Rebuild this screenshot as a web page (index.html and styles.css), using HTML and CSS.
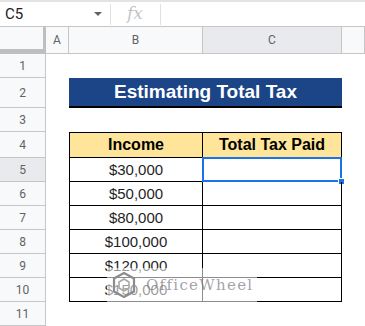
FILE: index.html
```html
<!DOCTYPE html>
<html lang="en">

<head>
  <meta charset="UTF-8">
  <meta name="viewport" content="width=device-width, initial-scale=1.0">
  <title>Estimating Total Tax</title>
  <link rel="stylesheet" href="styles.css">
</head>

<body>
  <!-- Formula bar -->
  <div class="formula-bar">
    <div class="name-box">
      <span class="cell-ref">C5</span>
      <span class="caret"></span>
    </div>
    <div class="fx">fx</div>
    <div class="formula-input"></div>
  </div>

  <!-- Sheet -->
  <div class="sheet">
    <div class="corner"></div>
    <div class="col-hdr">A</div>
    <div class="col-hdr">B</div>
    <div class="col-hdr selected">C</div>
    <div class="col-hdr"></div>

    <div class="row-hdr">1</div>
    <div class="cell"></div><div class="cell"></div><div class="cell"></div><div class="cell"></div>

    <div class="row-hdr">2</div>
    <div class="cell"></div>
    <div class="title">Estimating Total Tax</div>
    <div class="cell"></div>

    <div class="row-hdr">3</div>
    <div class="cell"></div><div class="cell"></div><div class="cell"></div><div class="cell"></div>

    <div class="row-hdr">4</div>
    <div class="cell"></div>
    <div class="tcell head first top">Income</div>
    <div class="tcell head top">Total Tax Paid</div>
    <div class="cell"></div>

    <div class="row-hdr selected">5</div>
    <div class="cell"></div>
    <div class="tcell first">$30,000</div>
    <div class="tcell active"><span class="sel-box"></span><span class="handle"></span></div>
    <div class="cell"></div>

    <div class="row-hdr">6</div>
    <div class="cell"></div>
    <div class="tcell first">$50,000</div>
    <div class="tcell"></div>
    <div class="cell"></div>

    <div class="row-hdr">7</div>
    <div class="cell"></div>
    <div class="tcell first">$80,000</div>
    <div class="tcell"></div>
    <div class="cell"></div>

    <div class="row-hdr">8</div>
    <div class="cell"></div>
    <div class="tcell first">$100,000</div>
    <div class="tcell"></div>
    <div class="cell"></div>

    <div class="row-hdr">9</div>
    <div class="cell"></div>
    <div class="tcell first">$120,000</div>
    <div class="tcell"></div>
    <div class="cell"></div>

    <div class="row-hdr">10</div>
    <div class="cell"></div>
    <div class="tcell first">$150,000</div>
    <div class="tcell"></div>
    <div class="cell"></div>

    <div class="row-hdr">11</div>
    <div class="cell"></div><div class="cell"></div><div class="cell"></div><div class="cell"></div>

    <!-- watermark -->
    <div class="watermark">
      <svg class="wm-logo" width="24" height="26" viewBox="0 0 24 26">
        <path d="M12 1 L22 6.5 L22 19.5 L12 25 L2 19.5 L2 6.5 Z" fill="none" stroke="#8c8c8c" stroke-width="2.2" />
        <path d="M12 7 L17 10 L17 16 L12 19 L7 16 L7 10 Z" fill="none" stroke="#a8a8a8" stroke-width="1.6" />
      </svg>
      <span class="wm-text">OfficeWheel</span>
    </div>
  </div>
</body>

</html>
```

FILE: styles.css
```css
:root {
  --hdr-bg: #f8f9fa;
  --hdr-sel: #e8eaed;
  --hdr-line: #c4c7c5;
  --hdr-text: #5f6368;
  --title-bg: #1c4587;
  --head-bg: #ffe599;
  --blue: #1a73e8;
}

* {
  box-sizing: border-box;
}

body {
  margin: 0;
  padding: 0;
  background: #fff;
  font-family: Roboto, 'Liberation Sans', Arial, sans-serif;
  width: 365px;
  height: 326px;
  overflow: hidden;
}

/* Formula bar */
.formula-bar {
  display: flex;
  align-items: center;
  height: 27px;
  border-top: 2px solid #e3e3e3;
  border-bottom: 1px solid var(--hdr-line);
}

.name-box {
  display: flex;
  align-items: center;
  justify-content: space-between;
  width: 111px;
  height: 21px;
  padding: 0 8px 0 5px;
  border-right: 1px solid #e0e0e0;
}

.cell-ref {
  font-size: 15px;
  color: #202124;
}

.caret {
  width: 0;
  height: 0;
  border-left: 4px solid transparent;
  border-right: 4px solid transparent;
  border-top: 4px solid #5f6368;
}

.fx {
  width: 50px;
  height: 21px;
  padding-left: 16px;
  font-family: 'DejaVu Serif', 'Liberation Serif', serif;
  font-style: italic;
  font-size: 17px;
  line-height: 19px;
  color: #c4c4c4;
  border-right: 1px solid #e0e0e0;
}

/* Grid */
.sheet {
  position: relative;
  display: grid;
  grid-template-columns: 46px 23px 134px 139px 23px;
  grid-template-rows: 27px 24px 30px 24px 26px repeat(6, 24px) 24px;
}

.corner {
  background: var(--hdr-bg);
  border-right: 3px solid #bfbfbf;
  border-bottom: 5px solid #bfbfbf;
}

.col-hdr {
  display: flex;
  align-items: center;
  justify-content: center;
  background: var(--hdr-bg);
  border-right: 1px solid var(--hdr-line);
  border-bottom: 1px solid var(--hdr-line);
  font-size: 12px;
  color: var(--hdr-text);
}

.row-hdr {
  display: flex;
  align-items: center;
  justify-content: center;
  background: var(--hdr-bg);
  border-right: 1px solid var(--hdr-line);
  border-bottom: 1px solid var(--hdr-line);
  font-size: 12px;
  color: var(--hdr-text);
}

.selected {
  background: var(--hdr-sel);
}

.cell {
  background: #fff;
}

.title {
  grid-column: span 2;
  display: flex;
  align-items: center;
  justify-content: center;
  background: var(--title-bg);
  border-bottom: 2px solid #000;
  color: #fff;
  font-family: 'Liberation Sans', Arial, sans-serif;
  font-weight: bold;
  font-size: 19px;
}

.tcell {
  position: relative;
  display: flex;
  align-items: center;
  justify-content: center;
  border-right: 1px solid #000;
  border-bottom: 1px solid #000;
  font-family: 'Liberation Sans', Arial, sans-serif;
  font-size: 15px;
  color: #1f1f1f;
}

.tcell.first {
  border-left: 1px solid #000;
}

.tcell.top {
  border-top: 1px solid #000;
}

.tcell.head {
  background: var(--head-bg);
  font-weight: bold;
  font-size: 16px;
  color: #000;
}

/* Active cell selection */
.sel-box {
  position: absolute;
  left: -1px;
  top: -1px;
  right: -1px;
  bottom: -1px;
  border: 2px solid var(--blue);
}

.handle {
  position: absolute;
  right: -4px;
  bottom: -4px;
  width: 7px;
  height: 7px;
  background: var(--blue);
  border: 1px solid #fff;
}

/* Watermark */
.watermark {
  position: absolute;
  left: 107px;
  top: 241px;
  width: 150px;
  height: 34px;
  display: flex;
  align-items: center;
  gap: 10px;
  padding-left: 5px;
  background: rgba(255, 255, 255, 0.55);
  overflow: hidden;
}

.wm-logo {
  flex: none;
}

.wm-text {
  font-family: 'DejaVu Serif', 'Liberation Serif', serif;
  font-size: 15px;
  letter-spacing: 1.3px;
  color: rgba(120, 120, 130, 0.7);
  white-space: nowrap;
}
```
